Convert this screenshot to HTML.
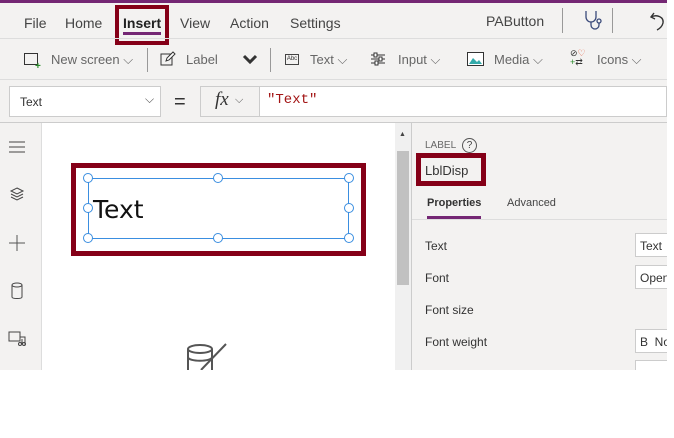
<!DOCTYPE html>
<html><head><style>
*{margin:0;padding:0;box-sizing:border-box}
body{width:674px;height:438px;background:#fff;font-family:"Liberation Sans",sans-serif;position:relative;overflow:hidden;color:#333}
.a{position:absolute}
.t{font-size:14px;color:#444}
.tb{font-size:13px;color:#666}
</style></head><body>
<div class="a" style="left:0;top:0;width:667px;height:370px;background:#f3f2f1"></div>
<div class="a" style="left:0;top:0;width:667px;height:3px;background:#742774"></div>
<!-- menu -->
<div class="a t" style="left:24px;top:15px">File</div>
<div class="a t" style="left:65px;top:15px">Home</div>
<div class="a" style="left:115px;top:5px;width:54px;height:40px;border:4px solid #850018"></div>
<div class="a t" style="left:123px;top:15px;font-weight:bold;color:#222">Insert</div>
<div class="a" style="left:123px;top:32px;width:38px;height:3px;background:#742774"></div>
<div class="a t" style="left:180px;top:15px">View</div>
<div class="a t" style="left:230px;top:15px">Action</div>
<div class="a t" style="left:290px;top:15px">Settings</div>
<div class="a t" style="left:486px;top:13px">PAButton</div>
<div class="a" style="left:562px;top:8px;width:1px;height:25px;background:#999"></div>
<div class="a" style="left:612px;top:8px;width:1px;height:25px;background:#999"></div>
<svg class="a" style="left:584px;top:10px" width="20" height="22" viewBox="0 0 20 22" fill="none" stroke="#3a4a7a" stroke-width="1.3"><path d="M2 1v6a5 5 0 0 0 10 0V1"/><path d="M7 12v3a4 4 0 0 0 8 0v-2"/><circle cx="15" cy="11" r="2"/></svg>
<svg class="a" style="left:650px;top:11px" width="17" height="20" viewBox="0 0 17 20" fill="none" stroke="#333" stroke-width="1.4"><path d="M4 2L1 6l4 2"/><path d="M1 6c6-3 13 0 12 6-1 4-4 6-6 7"/></svg>
<div class="a" style="left:0;top:38px;width:667px;height:1px;background:#ddd"></div>
<!-- toolbar -->
<div class="a" style="left:24px;top:53px;width:14px;height:12px;border:1px solid #333"></div>
<div class="a" style="left:35px;top:61px;color:#2a8a2a;font-size:10px;font-weight:bold">+</div>
<div class="a tb" style="left:51px;top:52px">New screen ⌵</div>
<div class="a" style="left:147px;top:48px;width:1px;height:24px;background:#999"></div>
<svg class="a" style="left:160px;top:51px" width="16" height="16" viewBox="0 0 16 16" fill="none" stroke="#333"><rect x="1" y="3" width="11" height="11"/><path d="M6 10l1-3 6-6 2 2-6 6z" fill="#fff"/></svg>
<div class="a tb" style="left:186px;top:52px">Label</div>
<svg class="a" style="left:242px;top:54px" width="16" height="12" viewBox="0 0 16 12"><path d="M2 2l6 6 6-6" fill="none" stroke="#333" stroke-width="3"/></svg>
<div class="a" style="left:270px;top:48px;width:1px;height:24px;background:#999"></div>
<div class="a" style="left:285px;top:54px;width:14px;height:11px;border:1px solid #444;font-size:6px;line-height:9px;text-align:center">Abc</div>
<div class="a tb" style="left:310px;top:52px">Text ⌵</div>
<svg class="a" style="left:370px;top:52px" width="16" height="14" stroke="#333"><path d="M1 3h14M1 7h14M1 11h14"/><rect x="4" y="1" width="3" height="4" fill="#fff"/><rect x="9" y="5" width="3" height="4" fill="#fff"/><rect x="5" y="9" width="3" height="4" fill="#fff"/></svg>
<div class="a tb" style="left:398px;top:52px">Input ⌵</div>
<svg class="a" style="left:467px;top:52px" width="17" height="14"><rect x="0.5" y="0.5" width="16" height="13" fill="#fff" stroke="#333"/><path d="M2 12l4-6 4 4 2-2 3 4z" fill="#3aa"/></svg>
<div class="a tb" style="left:494px;top:52px">Media ⌵</div>
<div class="a" style="left:570px;top:49px;font-size:9px;line-height:9px"><span style="color:#333">⊘</span><span style="color:#e05030">♡</span><br><span style="color:#2a8a2a">+</span><span style="color:#333">⇄</span></div>
<div class="a tb" style="left:597px;top:52px">Icons ⌵</div>
<div class="a" style="left:0;top:79px;width:667px;height:1px;background:#ddd"></div>
<!-- formula -->
<div class="a" style="left:9px;top:86px;width:152px;height:31px;background:#fff;border:1px solid #ccc"></div>
<div class="a" style="left:20px;top:95px;font-size:12px;color:#333">Text</div>
<div class="a" style="left:145px;top:92px;font-size:12px;color:#555">⌵</div>
<div class="a" style="left:174px;top:91px;font-size:20px;color:#333">=</div>
<div class="a" style="left:200px;top:86px;width:467px;height:31px;border:1px solid #ccc;background:#fff"></div>
<div class="a" style="left:201px;top:87px;width:59px;height:29px;background:#f3f2f1;border-right:1px solid #ccc"></div>
<div class="a" style="left:215px;top:89px;font-family:'Liberation Serif',serif;font-style:italic;font-size:19px">fx</div>
<div class="a" style="left:235px;top:94px;font-size:11px;color:#555">⌵</div>
<div class="a" style="left:267px;top:92px;font-family:'Liberation Mono',monospace;font-size:14px;color:#a31515">"Text"</div>
<div class="a" style="left:0;top:122px;width:667px;height:1px;background:#ccc"></div>
<!-- left rail -->
<div class="a" style="left:41px;top:123px;width:1px;height:247px;background:#ddd"></div>
<svg class="a" style="left:8px;top:140px" width="18" height="14" stroke="#444"><path d="M1 2h16M1 7h16M1 12h16"/></svg>
<svg class="a" style="left:9px;top:186px" width="16" height="16" fill="none" stroke="#444"><path d="M8 2l6 3-6 3-6-3z"/><path d="M2 8l6 3 6-3M2 11l6 3 6-3"/></svg>
<svg class="a" style="left:8px;top:234px" width="18" height="18" stroke="#555"><path d="M9 1v16M1 9h16"/></svg>
<svg class="a" style="left:10px;top:282px" width="14" height="18" fill="none" stroke="#444"><ellipse cx="7" cy="3" rx="5" ry="2"/><path d="M2 3v12c0 2 10 2 10 0V3"/></svg>
<svg class="a" style="left:8px;top:330px" width="18" height="16" fill="none" stroke="#444"><rect x="1" y="2" width="11" height="9"/><path d="M12 7h5v8M14 9v5"/><circle cx="12" cy="14" r="1.5"/><circle cx="16" cy="14" r="1.5"/></svg>
<!-- canvas -->
<div class="a" style="left:42px;top:123px;width:353px;height:247px;background:#fff"></div>
<div class="a" style="left:71px;top:163px;width:295px;height:93px;border:5px solid #850018"></div>
<div class="a" style="left:88px;top:178px;width:261px;height:61px;border:1px solid #3a8ee0"></div>
<div class="a" style="left:93px;top:195px;font-size:25px;color:#111;font-family:'DejaVu Sans',sans-serif">Text</div>
<div class="a" style="left:83px;top:173px;width:10px;height:10px;border:1.5px solid #3a8ee0;border-radius:50%;background:#fff"></div>
<div class="a" style="left:213px;top:173px;width:10px;height:10px;border:1.5px solid #3a8ee0;border-radius:50%;background:#fff"></div>
<div class="a" style="left:344px;top:173px;width:10px;height:10px;border:1.5px solid #3a8ee0;border-radius:50%;background:#fff"></div>
<div class="a" style="left:83px;top:203px;width:10px;height:10px;border:1.5px solid #3a8ee0;border-radius:50%;background:#fff"></div>
<div class="a" style="left:344px;top:203px;width:10px;height:10px;border:1.5px solid #3a8ee0;border-radius:50%;background:#fff"></div>
<div class="a" style="left:83px;top:233px;width:10px;height:10px;border:1.5px solid #3a8ee0;border-radius:50%;background:#fff"></div>
<div class="a" style="left:213px;top:233px;width:10px;height:10px;border:1.5px solid #3a8ee0;border-radius:50%;background:#fff"></div>
<div class="a" style="left:344px;top:233px;width:10px;height:10px;border:1.5px solid #3a8ee0;border-radius:50%;background:#fff"></div>
<svg class="a" style="left:186px;top:342px" width="42" height="28" fill="none" stroke="#555" stroke-width="2"><ellipse cx="14" cy="7" rx="12" ry="4"/><path d="M2 7v21M26 7v21M2 15c0 5 24 5 24 0"/><path d="M15 28L40 2" stroke-width="2"/></svg>
<!-- scrollbar -->
<div class="a" style="left:395px;top:123px;width:16px;height:247px;background:#f0f0f0"></div>
<div class="a" style="left:399px;top:131px;font-size:7px;color:#444">▲</div>
<div class="a" style="left:397px;top:151px;width:12px;height:134px;background:#c1c1c1"></div>
<div class="a" style="left:411px;top:123px;width:1px;height:247px;background:#ccc"></div>
<!-- right panel -->
<div class="a" style="left:425px;top:140px;font-size:10px;color:#666">LABEL</div>
<div class="a" style="left:462px;top:138px;width:15px;height:15px;border:1px solid #555;border-radius:50%;font-size:10px;text-align:center;line-height:13px;color:#444">?</div>
<div class="a" style="left:416px;top:153px;width:70px;height:33px;border:5px solid #850018"></div>
<div class="a" style="left:425px;top:163px;font-size:13px;color:#333">LblDisp</div>
<div class="a" style="left:427px;top:197px;font-size:11px;font-weight:bold;color:#333">Properties</div>
<div class="a" style="left:427px;top:216px;width:54px;height:3px;background:#742774"></div>
<div class="a" style="left:507px;top:197px;font-size:11px;color:#444">Advanced</div>
<div class="a" style="left:412px;top:219px;width:255px;height:1px;background:#ddd"></div>
<div class="a" style="left:425px;top:239px;font-size:12px;color:#333">Text</div>
<div class="a" style="left:425px;top:271px;font-size:12px;color:#333">Font</div>
<div class="a" style="left:425px;top:303px;font-size:12px;color:#333">Font size</div>
<div class="a" style="left:425px;top:335px;font-size:12px;color:#333">Font weight</div>
<div class="a" style="left:635px;top:233px;width:32px;height:24px;background:#fff;border:1px solid #ccc;border-right:none;font-size:12px;padding:5px 4px;overflow:hidden">Text</div>
<div class="a" style="left:635px;top:265px;width:32px;height:24px;background:#fff;border:1px solid #ccc;border-right:none;font-size:12px;padding:5px 4px;overflow:hidden;white-space:nowrap">Open</div>
<div class="a" style="left:635px;top:329px;width:32px;height:24px;background:#fff;border:1px solid #ccc;border-right:none;font-size:12px;padding:5px 4px;overflow:hidden;white-space:nowrap">B&nbsp; No</div>
<div class="a" style="left:635px;top:360px;width:32px;height:10px;background:#fff;border:1px solid #ccc;border-right:none;border-bottom:none"></div>
</body></html>
